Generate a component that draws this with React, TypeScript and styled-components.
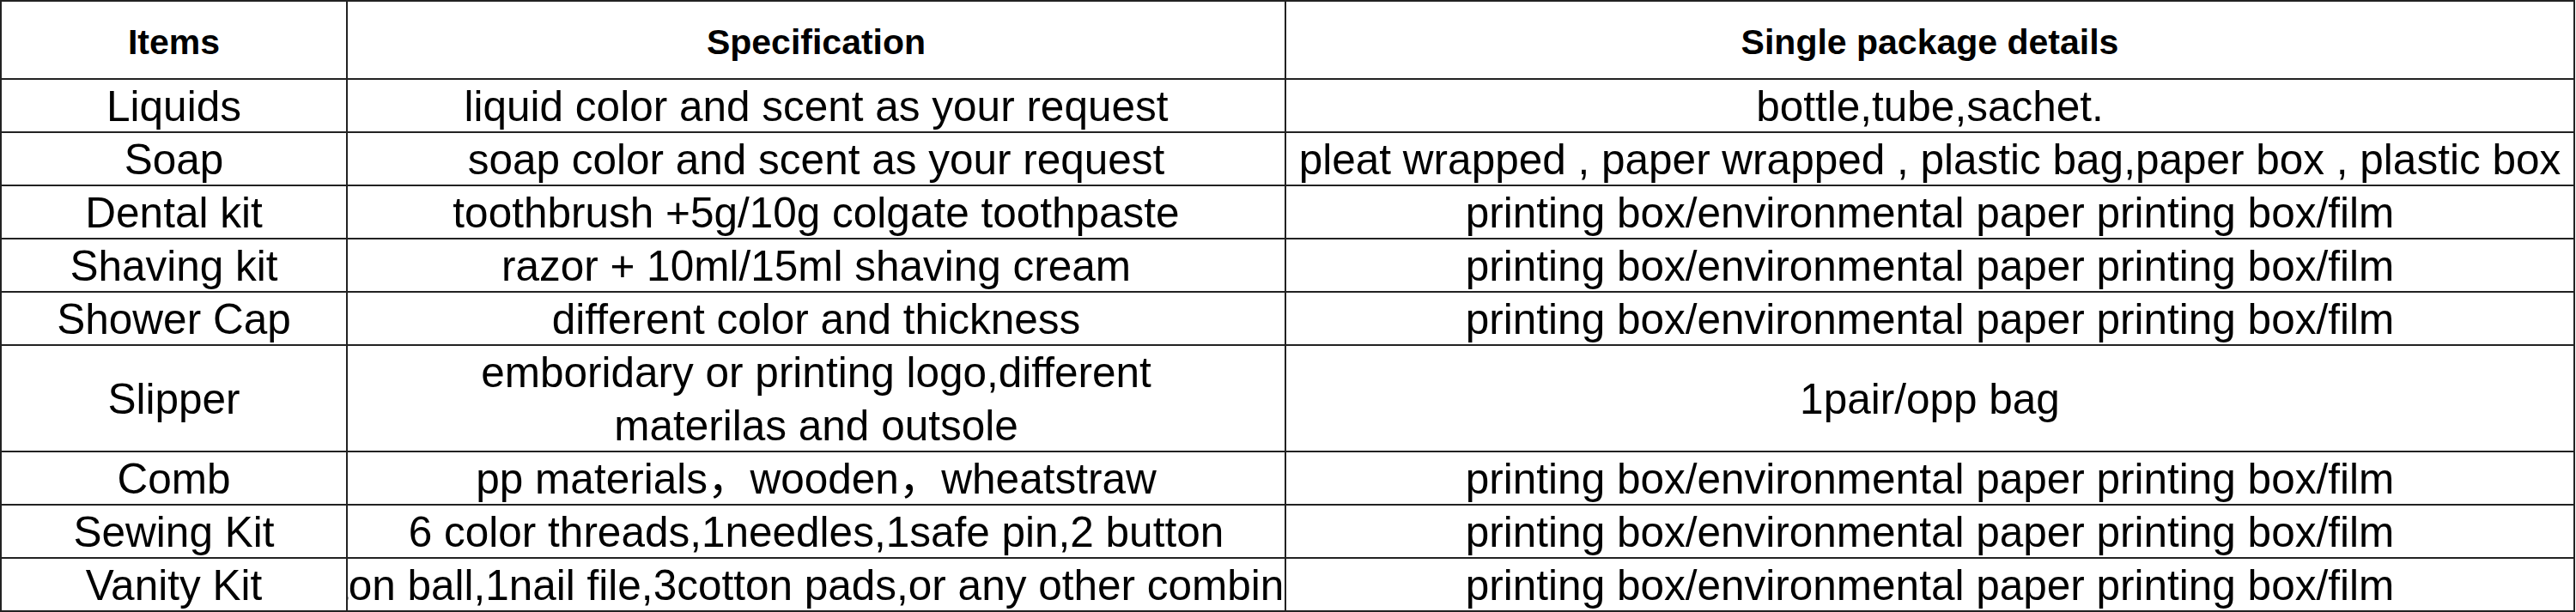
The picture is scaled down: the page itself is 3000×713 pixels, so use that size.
import React from "react";
import styled, { createGlobalStyle } from "styled-components";

interface Row {
  item: string;
  spec: React.ReactNode;
  pack: string;
  tall?: boolean;
}

const rows: Row[] = [
  {
    item: "Liquids",
    spec: "liquid color and scent as your request",
    pack: "bottle,tube,sachet.",
  },
  {
    item: "Soap",
    spec: "soap color and scent as your request",
    pack: "pleat wrapped , paper wrapped , plastic bag,paper box , plastic box",
  },
  {
    item: "Dental kit",
    spec: "toothbrush +5g/10g colgate toothpaste",
    pack: "printing box/environmental paper printing box/film",
  },
  {
    item: "Shaving kit",
    spec: "razor + 10ml/15ml shaving cream",
    pack: "printing box/environmental paper printing box/film",
  },
  {
    item: "Shower Cap",
    spec: "different color and thickness",
    pack: "printing box/environmental paper printing box/film",
  },
  {
    item: "Slipper",
    spec: (
      <>
        emboridary or printing logo,different
        <br />
        materilas and outsole
      </>
    ),
    pack: "1pair/opp bag",
    tall: true,
  },
  {
    item: "Comb",
    spec: "pp materials，wooden，wheatstraw",
    pack: "printing box/environmental paper printing box/film",
  },
  {
    item: "Sewing Kit",
    spec: "6 color threads,1needles,1safe pin,2 button",
    pack: "printing box/environmental paper printing box/film",
  },
  {
    item: "Vanity Kit",
    // the sheet clips this one on both sides, like the spreadsheet export
    spec: "1cotton ball,1nail file,3cotton pads,or any other combination",
    pack: "printing box/environmental paper printing box/film",
  },
];

export default function App() {
  return (
    <>
      <GlobalStyle />
      <Sheet>
        <HeadCell>Items</HeadCell>
        <HeadCell>Specification</HeadCell>
        <HeadCell>Single package details</HeadCell>
        {rows.map((row) => (
          <React.Fragment key={row.item}>
            <Cell $tall={row.tall}>{row.item}</Cell>
            <Cell $tall={row.tall}>
              <CellText>{row.spec}</CellText>
            </Cell>
            <Cell $tall={row.tall}>{row.pack}</Cell>
          </React.Fragment>
        ))}
      </Sheet>
    </>
  );
}

const GlobalStyle = createGlobalStyle`
  html, body {
    margin: 0;
    padding: 0;
    background: #ffffff;
  }
  body {
    font-family: "Liberation Sans", Arial, "Noto Sans CJK SC", sans-serif;
    color: #000000;
  }
`;

const Sheet = styled.div`
  display: grid;
  grid-template-columns: 401px 1091px 1499px;
  grid-template-rows: 89px;
  grid-auto-rows: 60px;
  gap: 2px;
  padding: 2px;
  width: 2999px;
  box-sizing: border-box;
  background-color: #222222;
`;

const Cell = styled.div<{ $tall?: boolean }>`
  grid-row: ${({ $tall }) => ($tall ? "span 2" : "auto")};
  display: flex;
  align-items: center;
  justify-content: center;
  overflow: hidden;
  background-color: #ffffff;
  font-size: 49.5px;
  line-height: 62px;
  white-space: nowrap;
  text-align: center;
  padding-top: 2px;
  box-sizing: border-box;
`;

const HeadCell = styled(Cell)`
  font-size: 41px;
  font-weight: 700;
  padding-top: 4px;
`;

const CellText = styled.div`
  flex-shrink: 0;
  text-align: center;
`;
